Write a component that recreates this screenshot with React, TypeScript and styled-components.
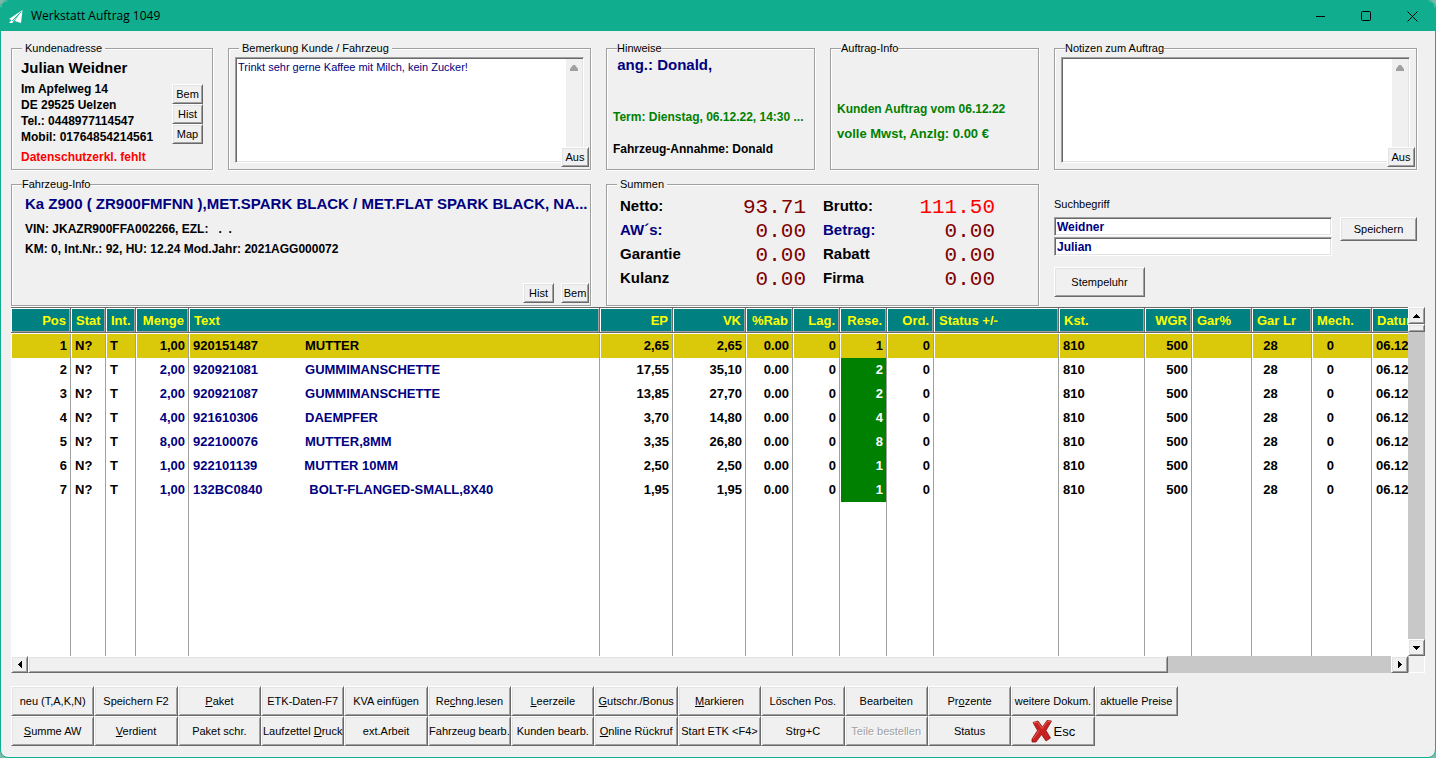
import React from "react";
import styled, { createGlobalStyle, css } from "styled-components";

const c = {
  teal: "#10ae8e",
  face: "#f0f0f0",
  light: "#ffffff",
  soft: "#e3e3e3",
  shade: "#a0a0a0",
  dark: "#696969",
  navy: "#000080",
  green: "#008000",
  red: "#ff0000",
  maroon: "#800000",
  track: "#c8c8c8",
};

const raised = css`
  border: 1px solid;
  border-color: ${c.light} ${c.dark} ${c.dark} ${c.light};
  box-shadow: inset 1px 1px 0 ${c.soft}, inset -1px -1px 0 ${c.shade};
`;

const sunken = css`
  border: 1px solid;
  border-color: ${c.shade} ${c.light} ${c.light} ${c.shade};
  box-shadow: inset 1px 1px 0 ${c.dark}, inset -1px -1px 0 ${c.soft};
`;

const GlobalStyle = createGlobalStyle`
  *, *::before, *::after { box-sizing: border-box; }
  body {
    margin: 0;
    background: #7fb8a8;
    color: #000;
    font: 11px/13px "Liberation Sans", Arial, sans-serif;
  }
  p { margin: 0; }
`;

const Window = styled.div`
  display: flex;
  flex-direction: column;
  height: 100vh;
  min-height: 640px;
  border: 1px solid ${c.teal};
  border-radius: 8px;
  background: ${c.face};
  overflow: hidden;
`;

const TitleBar = styled.header`
  display: flex;
  align-items: center;
  flex: none;
  height: 30px;
  padding-left: 7px;
  background: ${c.teal};
`;

const Title = styled.h1`
  flex: 1;
  margin: 0 0 0 8px;
  font: 12px/16px "Open Sans", "Segoe UI", sans-serif;
`;

const CaptionButton = styled.button`
  display: flex;
  align-items: center;
  justify-content: center;
  width: 46px;
  height: 30px;
  padding: 0;
  border: 0;
  background: none;
`;

const Panels = styled.section`
  display: grid;
  grid-template-columns: 202fr 363fr 209fr 209fr 363fr;
  gap: 8px 15px;
  flex: none;
  padding: 11px 18px 0 10px;
`;

const Group = styled.fieldset<{ $span?: number }>`
  position: relative;
  grid-column: span ${(p) => p.$span ?? 1};
  min-width: 0;
  height: 128px;
  margin: 0;
  padding: 0;
  border: 1px solid ${c.shade};
  box-shadow: 1px 1px 0 ${c.light}, inset 1px 1px 0 ${c.light};
`;

const Legend = styled.legend<{ $tight?: boolean }>`
  margin-left: 10px;
  padding: 0 ${(p) => (p.$tight ? 0 : 3)}px;
  background: ${c.face};
  line-height: 13px;
`;

const Split = styled.div`
  display: flex;
  justify-content: space-between;
  padding: 3px 9px 0;
`;

const Stack = styled.div<{ $pad?: string }>`
  display: flex;
  flex-direction: column;
  min-width: 0;
  padding: ${(p) => p.$pad ?? "0"};
`;

const Line = styled.p<{ $size?: number; $color?: string; $gap?: number }>`
  margin-top: ${(p) => p.$gap ?? 0}px;
  color: ${(p) => p.$color ?? "#000"};
  font-size: ${(p) => p.$size ?? 12}px;
  font-weight: bold;
  line-height: ${(p) => ((p.$size ?? 12) > 13 ? 20 : 16)}px;
  white-space: pre;
`;

const Button = styled.button`
  ${raised}
  padding: 0;
  background: ${c.face};
  color: #000;
  font: 11px/13px "Liberation Sans", Arial, sans-serif;
  white-space: nowrap;
  &:disabled {
    color: ${c.shade};
    text-shadow: 1px 1px 0 ${c.light};
  }
`;

const SmallButton = styled(Button)<{ $narrow?: boolean }>`
  width: ${(p) => (p.$narrow ? 28 : 31)}px;
  height: 20px;
`;

const SideButtons = styled.div`
  display: flex;
  flex-direction: column;
  margin-top: 26px;
`;

const CornerButtons = styled.div`
  position: absolute;
  right: 1px;
  bottom: 2px;
  display: flex;
  gap: 7px;
`;

const MemoFrame = styled.div`
  ${sunken}
  display: flex;
  height: 106px;
  margin: 2px 6px 0;
  padding: 1px;
  background: #fff;
`;

const Memo = styled.textarea`
  flex: 1;
  min-width: 0;
  padding: 2px 1px;
  border: 0;
  background: #fff;
  color: ${c.navy};
  font: 11px/13px "Liberation Sans", Arial, sans-serif;
  resize: none;
  overflow: hidden;
  outline: 0;
`;

const MemoTrack = styled.div`
  display: flex;
  justify-content: center;
  width: 16px;
  padding-top: 6px;
  background: ${c.face};
`;

const Sums = styled.dl`
  display: grid;
  grid-template-columns: 90px 96fr 90px 99fr;
  grid-auto-rows: 24px;
  align-items: center;
  margin: 0;
  padding: 3px 43px 0 13px;
`;

const SumLabel = styled.dt<{ $color?: string; $second?: boolean }>`
  padding-left: ${(p) => (p.$second ? 17 : 0)}px;
  color: ${(p) => p.$color ?? "#000"};
  font: bold 15px/20px "Liberation Sans", Arial, sans-serif;
`;

const SumValue = styled.dd<{ $color?: string }>`
  margin: 0;
  padding-top: 4px;
  color: ${(p) => p.$color ?? c.maroon};
  font: 21px/20px "Liberation Mono", "Courier New", monospace;
  text-align: right;
`;

const Search = styled.form`
  display: grid;
  grid-template-columns: 1fr 77px;
  gap: 0 8px;
  align-content: start;
  padding-top: 20px;
`;

const SearchLabel = styled.label`
  grid-column: 1 / -1;
  margin-bottom: 6px;
`;

const Inputs = styled.div`
  display: grid;
  gap: 1px;
`;

const TextInput = styled.input`
  ${sunken}
  width: 100%;
  height: 19px;
  padding: 0 2px;
  border-radius: 0;
  background: #fff;
  color: ${c.navy};
  font: bold 12px/14px "Liberation Sans", Arial, sans-serif;
  outline: 0;
`;

const SaveButton = styled(Button)`
  height: 24px;
`;

const ClockButton = styled(Button)`
  width: 91px;
  height: 30px;
  margin-top: 11px;
`;

const Grid = styled.main`
  display: grid;
  grid-template: minmax(0, 1fr) 17px / minmax(0, 1fr) 17px;
  flex: 1;
  min-height: 0;
  margin: 1px 10px 0;
`;

const TableView = styled.div`
  min-height: 0;
  background: #fff;
  overflow: hidden;
`;

const Table = styled.table`
  width: calc(100% + 41px);
  height: 100%;
  table-layout: fixed;
  border-collapse: separate;
  border-spacing: 0;
  font-size: 13px;
  font-weight: bold;
  line-height: 16px;
`;

type Align = "left" | "right";

const Th = styled.th<{ $align: Align }>`
  height: 27px;
  padding: 1px 5px 0 5px;
  border-bottom: 1px solid #fff;
  background: #008080;
  box-shadow: inset 0 1px 0 ${c.dark}, inset 0 -1px 0 ${c.dark}, inset -1px 0 0 ${c.dark},
    inset 1px 2px 0 ${c.light}, inset -2px -2px 0 ${c.shade};
  color: #ffff00;
  text-align: ${(p) => p.$align};
  white-space: nowrap;
`;

const Td = styled.td<{ $align: Align; $navy?: boolean; $reserved?: boolean }>`
  padding: 0 3px;
  border-left: 1px solid #fff;
  border-right: 1px solid ${c.shade};
  background: ${(p) => (p.$reserved ? c.green : "transparent")};
  background-clip: padding-box;
  color: ${(p) => (p.$reserved ? "#fff" : p.$navy ? c.navy : "#000")};
  text-align: ${(p) => p.$align};
  white-space: pre;
`;

const Tr = styled.tr<{ $selected?: boolean }>`
  height: 24px;
  ${(p) =>
    p.$selected &&
    css`
      ${Td} {
        background-color: #dac80b;
        color: #000;
      }
    `}
`;

const ScrollBar = styled.div<{ $vertical?: boolean }>`
  display: flex;
  flex-direction: ${(p) => (p.$vertical ? "column" : "row")};
  background: ${c.track};
`;

const ScrollCorner = styled.div`
  border: 1px solid;
  border-color: ${c.face} ${c.light} ${c.light} ${c.shade};
`;

const ScrollButton = styled.button`
  ${raised}
  display: flex;
  align-items: center;
  justify-content: center;
  flex: none;
  width: 17px;
  height: 17px;
  padding: 0;
  background: ${c.face};
`;

const Thumb = styled.div<{ $grow?: number }>`
  ${raised}
  flex: ${(p) => (p.$grow ? `${p.$grow} 0 0` : "0 0 8px")};
  background: ${c.face};
`;

const Gap = styled.div<{ $grow: number }>`
  flex: ${(p) => p.$grow} 0 0;
`;

const Actions = styled.footer`
  display: grid;
  grid-template-columns: repeat(17, 1fr);
  grid-auto-rows: 30px;
  flex: none;
  padding: 13px 7px 11px 10px;
`;

const ActionButton = styled(Button)<{ $start?: boolean }>`
  display: flex;
  align-items: center;
  justify-content: center;
  min-width: 0;
  overflow: hidden;
  grid-column-start: ${(p) => (p.$start ? 1 : "auto")};
`;

const EscButton = styled(ActionButton)`
  gap: 1px;
  font-size: 13px;
`;

const Arrow = ({ dir }: { dir: "up" | "down" | "left" | "right" }) => {
  const d = {
    up: "M3 0h1v1h1v1h1v1h1v1H0V3h1V2h1V1h1z",
    down: "M0 0h7v1H6v1H5v1H4v1H3V3H2V2H1V1H0z",
    left: "M3 0h1v7H3V6H2V5H1V4H0V3h1V2h1V1h1z",
    right: "M0 0h1v1h1v1h1v1h1v1H3v1H2v1H1v1H0z",
  }[dir];
  const wide = dir === "up" || dir === "down";
  return (
    <svg width={wide ? 7 : 4} height={wide ? 4 : 7} aria-hidden="true">
      <path d={d} />
    </svg>
  );
};

interface MemoProps {
  label: string;
  text?: string;
  tight?: boolean;
}

const MemoGroup = ({ label, text = "", tight }: MemoProps) => (
  <Group>
    <Legend $tight={tight}>{label}</Legend>
    <MemoFrame>
      <Memo aria-label={label} defaultValue={text} spellCheck={false} />
      <MemoTrack>
        <svg width="8" height="6" fill={c.shade} aria-hidden="true">
          <path d="M3 0h2l3 4v2H0V4z" />
        </svg>
      </MemoTrack>
    </MemoFrame>
    <CornerButtons>
      <SmallButton $narrow>Aus</SmallButton>
    </CornerButtons>
  </Group>
);

interface Column {
  title: string;
  width?: number;
  align: Align;
}

const columns: Column[] = [
  { title: "Pos", width: 60, align: "right" },
  { title: "Stat", width: 35, align: "left" },
  { title: "Int.", width: 30, align: "left" },
  { title: "Menge", width: 53, align: "right" },
  { title: "Text", align: "left" },
  { title: "EP", width: 73, align: "right" },
  { title: "VK", width: 73, align: "right" },
  { title: "%Rab", width: 47, align: "right" },
  { title: "Lag.", width: 47, align: "right" },
  { title: "Rese.", width: 47, align: "right" },
  { title: "Ord.", width: 47, align: "right" },
  { title: "Status +/-", width: 125, align: "left" },
  { title: "Kst.", width: 86, align: "left" },
  { title: "WGR", width: 47, align: "right" },
  { title: "Gar%", width: 60, align: "left" },
  { title: "Gar Lr", width: 60, align: "left" },
  { title: "Mech.", width: 60, align: "left" },
  { title: "Datum", width: 77, align: "left" },
];

const items = [
  ["1,00", "920151487", "MUTTER", "2,65", "2,65", "1"],
  ["2,00", "920921081", "GUMMIMANSCHETTE", "17,55", "35,10", "2"],
  ["2,00", "920921087", "GUMMIMANSCHETTE", "13,85", "27,70", "2"],
  ["4,00", "921610306", "DAEMPFER", "3,70", "14,80", "4"],
  ["8,00", "922100076", "MUTTER,8MM", "3,35", "26,80", "8"],
  ["1,00", "922101139", "MUTTER 10MM", "2,50", "2,50", "1"],
  ["1,00", "132BC0840", "BOLT-FLANGED-SMALL,8X40", "1,95", "1,95", "1"],
];

const rows = items.map(([qty, part, name, ep, vk, reserved], i) => [
  String(i + 1), "N?", "T", qty, part + " ".repeat(13) + name, ep, vk, "0.00", "0",
  reserved, "0", "", "810", "500", "", "  28", "   0", "06.12.22",
]);

const sums: [string, string, string?, string?][] = [
  ["Netto:", "93.71"],
  ["Brutto:", "111.50", undefined, c.red],
  ["AW´s:", "0.00", c.navy],
  ["Betrag:", "0.00", c.navy],
  ["Garantie", "0.00"],
  ["Rabatt", "0.00"],
  ["Kulanz", "0.00"],
  ["Firma", "0.00"],
];

// An underscore marks the access key that follows it.
const topActions = [
  "neu (T,A,K,N)", "Speichern F2", "_Paket", "ETK-Daten-F7", "KVA einfügen", "Re_chng.lesen", "_Leerzeile",
  "_Gutschr./Bonus", "_Markieren", "Löschen Pos.", "Bearbeiten", "Pr_ozente", "weitere Dokum.", "aktuelle Preise",
];
const bottomActions = [
  "_Summe AW", "_Verdient", "Paket schr.", "Laufzettel _Druck", "ext.Arbeit", "Fahrzeug bearb.", "Kunden bearb.",
  "_Online Rückruf", "Start ETK <F4>", "Strg+C", "Teile bestellen", "Status",
];

const Caption = ({ text }: { text: string }) => {
  const at = text.indexOf("_");
  if (at < 0) return <span>{text}</span>;
  return (
    <span>
      {text.slice(0, at)}
      <u>{text[at + 1]}</u>
      {text.slice(at + 2)}
    </span>
  );
};

export default function App() {
  return (
    <>
      <GlobalStyle />
      <Window>
        <TitleBar>
          <svg width="15" height="15" viewBox="0 0 15 15" fill="#fff" aria-hidden="true">
            <path d="M14.500 1L1 10l2.500 1L1 14h3.500l1-2z" />
            <path d="M14.500 1L6.500 12l6.500 2z" />
            <path d="M13 3L4 12" stroke={c.teal} strokeWidth=".9" />
          </svg>
          <Title>Werkstatt Auftrag 1049</Title>
          <CaptionButton aria-label="Minimieren">
            <svg width="11" height="11" stroke="#000" fill="none">
              <path d="M1 5.500h9" />
            </svg>
          </CaptionButton>
          <CaptionButton aria-label="Maximieren">
            <svg width="11" height="11" stroke="#000" fill="none">
              <rect x=".5" y=".5" width="9" height="9" rx="1" />
            </svg>
          </CaptionButton>
          <CaptionButton aria-label="Schließen">
            <svg width="11" height="11" stroke="#000" fill="none">
              <path d="M.5 .5l10 10M10.500 .5l-10 10" />
            </svg>
          </CaptionButton>
        </TitleBar>

        <Panels>
          <Group>
            <Legend>Kundenadresse</Legend>
            <Split>
              <Stack>
                <Line $size={15}>Julian Weidner</Line>
                <Line $gap={3}>Im Apfelweg 14</Line>
                <Line>DE 29525 Uelzen</Line>
                <Line>Tel.: 0448977114547</Line>
                <Line>Mobil: 01764854214561</Line>
                <Line $gap={4} $color={c.red}>Datenschutzerkl. fehlt</Line>
              </Stack>
              <SideButtons>
                <SmallButton>Bem</SmallButton>
                <SmallButton>Hist</SmallButton>
                <SmallButton>Map</SmallButton>
              </SideButtons>
            </Split>
          </Group>

          <MemoGroup label="Bemerkung Kunde / Fahrzeug" text="Trinkt sehr gerne Kaffee mit Milch, kein Zucker!" />

          <Group>
            <Legend $tight>Hinweise</Legend>
            <Stack $pad="0 6px">
              <Line $size={15} $color={c.navy}> ang.: Donald,</Line>
              <Line $gap={34} $color={c.green}>Term: Dienstag, 06.12.22, 14:30 ...</Line>
              <Line $gap={16}>Fahrzeug-Annahme: Donald</Line>
            </Stack>
          </Group>

          <Group>
            <Legend $tight>Auftrag-Info</Legend>
            <Stack $pad="46px 6px 0">
              <Line $color={c.green}>Kunden Auftrag vom 06.12.22</Line>
              <Line $gap={9} $size={13} $color={c.green}>volle Mwst, Anzlg: 0.00 €</Line>
            </Stack>
          </Group>

          <MemoGroup label="Notizen zum Auftrag" tight />

          <Group $span={2}>
            <Legend $tight>Fahrzeug-Info</Legend>
            <Stack $pad="3px 13px 0">
              <Line $size={15} $color={c.navy}>
                Ka Z900 ( ZR900FMFNN ),MET.SPARK BLACK / MET.FLAT SPARK BLACK, NA...
              </Line>
              <Line $gap={7}>{"VIN: JKAZR900FFA002266, EZL:   .  ."}</Line>
              <Line $gap={4}>KM: 0, Int.Nr.: 92, HU: 12.24 Mod.Jahr: 2021AGG000072</Line>
            </Stack>
            <CornerButtons>
              <SmallButton>Hist</SmallButton>
              <SmallButton $narrow>Bem</SmallButton>
            </CornerButtons>
          </Group>

          <Group $span={2}>
            <Legend>Summen</Legend>
            <Sums>
              {sums.map(([label, value, color, valueColor], i) => (
                <React.Fragment key={label}>
                  <SumLabel $color={color} $second={i % 2 === 1}>{label}</SumLabel>
                  <SumValue $color={valueColor}>{value}</SumValue>
                </React.Fragment>
              ))}
            </Sums>
          </Group>

          <Search onSubmit={(e) => e.preventDefault()}>
            <SearchLabel htmlFor="term">Suchbegriff</SearchLabel>
            <Inputs>
              <TextInput id="term" defaultValue="Weidner" />
              <TextInput aria-label="Suchbegriff 2" defaultValue="Julian" />
            </Inputs>
            <SaveButton type="submit">Speichern</SaveButton>
            <ClockButton type="button">Stempeluhr</ClockButton>
          </Search>
        </Panels>

        <Grid>
          <TableView>
            <Table>
              <colgroup>
                {columns.map((col) => (
                  <col key={col.title} width={col.width} />
                ))}
              </colgroup>
              <thead>
                <tr>
                  {columns.map((col) => (
                    <Th key={col.title} $align={col.align}>{col.title}</Th>
                  ))}
                </tr>
              </thead>
              <tbody>
                {rows.map((cells, r) => (
                  <Tr key={cells[0]} $selected={r === 0}>
                    {cells.map((text, i) => (
                      <Td
                        key={columns[i].title}
                        $align={columns[i].align}
                        $navy={i === 3 || i === 4}
                        $reserved={i === 9 && r > 0}
                      >
                        {text}
                      </Td>
                    ))}
                  </Tr>
                ))}
                <tr>
                  {columns.map((col) => (
                    <Td key={col.title} $align={col.align} />
                  ))}
                </tr>
              </tbody>
            </Table>
          </TableView>
          <ScrollBar $vertical>
            <ScrollButton aria-label="Nach oben"><Arrow dir="up" /></ScrollButton>
            <Thumb />
            <Gap $grow={1} />
            <ScrollButton aria-label="Nach unten"><Arrow dir="down" /></ScrollButton>
          </ScrollBar>
          <ScrollBar>
            <ScrollButton aria-label="Nach links"><Arrow dir="left" /></ScrollButton>
            <Thumb $grow={1140} />
            <Gap $grow={223} />
            <ScrollButton aria-label="Nach rechts"><Arrow dir="right" /></ScrollButton>
          </ScrollBar>
          <ScrollCorner />
        </Grid>

        <Actions>
          {topActions.map((text) => (
            <ActionButton key={text}><Caption text={text} /></ActionButton>
          ))}
          {bottomActions.map((text, i) => (
            <ActionButton key={text} $start={i === 0} disabled={text === "Teile bestellen"}>
              <Caption text={text} />
            </ActionButton>
          ))}
          <EscButton>
            <svg width="22" height="24" viewBox="0 0 22 24" aria-hidden="true">
              <path
                d="M2 3.500L7 2l4.500 6L16 1.500 20.500 2 15 11.500l4.500 7.500-4.500 3-4.500-6.500L5 23H1v-3l5.500-8.500z"
                fill="#c62222"
                stroke="#8c1414"
                strokeWidth=".8"
                strokeLinejoin="round"
              />
              <path d="M2.500 4L6.500 3l4.500 6.500L16.500 2.500 19.500 2.500M2 20l6-8.500" fill="none" stroke="#ee5a50" />
            </svg>
            <span>Esc</span>
          </EscButton>
        </Actions>
      </Window>
    </>
  );
}
